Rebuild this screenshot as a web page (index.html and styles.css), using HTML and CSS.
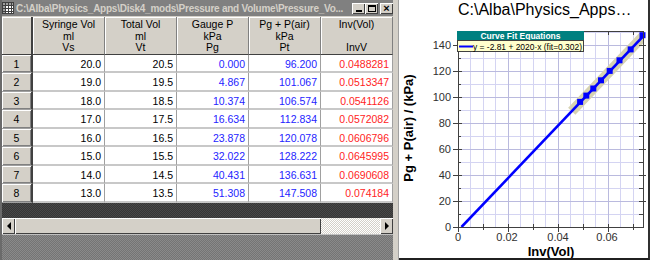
FILE: index.html
```html
<!DOCTYPE html>
<html>
<head>
<meta charset="utf-8">
<link rel="stylesheet" href="styles.css">
</head>
<body>
<div class="screen">
  <div class="win">
    <div class="titlebar">
      <svg class="ticon" width="12" height="12" viewBox="0 0 12 12">
        <rect x="0.5" y="0.5" width="11" height="11" fill="#fff" stroke="#404040"/>
        <rect x="1" y="1" width="10" height="2" fill="#a0a0a0"/>
        <rect x="1" y="1" width="2" height="10" fill="#a0a0a0"/>
        <path d="M0 3.5H12M0 6.5H12M0 9.5H12M3.5 0V12M6.5 0V12M9.5 0V12" stroke="#404040" stroke-width="1"/>
      </svg>
      <span class="ttext">C:\Alba\Physics_Apps\Disk4_mods\Pressure and Volume\Pressure_Vo...</span>
      <div class="tbtns">
        <span class="tbtn"><span class="g-min"></span></span>
        <span class="tbtn"><span class="g-max"></span></span>
        <span class="tbtn close">×</span>
      </div>
    </div>
    <div class="grid">
      <div class="hc corner"></div>
      <div class="hc">Syringe Vol<br>ml<br>Vs</div>
      <div class="hc">Total Vol<br>ml<br>Vt</div>
      <div class="hc">Gauge P<br>kPa<br>Pg</div>
      <div class="hc">Pg + P(air)<br>kPa<br>Pt</div>
      <div class="hc">Inv(Vol)<br><br>InvV</div>

      <div class="rh">1</div><div class="c">20.0</div><div class="c">20.5</div><div class="c blue">0.000</div><div class="c blue">96.200</div><div class="c red">0.0488281</div>
      <div class="rh">2</div><div class="c">19.0</div><div class="c">19.5</div><div class="c blue">4.867</div><div class="c blue">101.067</div><div class="c red">0.0513347</div>
      <div class="rh">3</div><div class="c">18.0</div><div class="c">18.5</div><div class="c blue">10.374</div><div class="c blue">106.574</div><div class="c red">0.0541126</div>
      <div class="rh">4</div><div class="c">17.0</div><div class="c">17.5</div><div class="c blue">16.634</div><div class="c blue">112.834</div><div class="c red">0.0572082</div>
      <div class="rh">5</div><div class="c">16.0</div><div class="c">16.5</div><div class="c blue">23.878</div><div class="c blue">120.078</div><div class="c red">0.0606796</div>
      <div class="rh">6</div><div class="c">15.0</div><div class="c">15.5</div><div class="c blue">32.022</div><div class="c blue">128.222</div><div class="c red">0.0645995</div>
      <div class="rh">7</div><div class="c">14.0</div><div class="c">14.5</div><div class="c blue">40.431</div><div class="c blue">136.631</div><div class="c red">0.0690608</div>
      <div class="rh">8</div><div class="c">13.0</div><div class="c">13.5</div><div class="c blue">51.308</div><div class="c blue">147.508</div><div class="c red">0.074184</div>
    </div>
    <div class="empty"></div>
    <div class="hscroll">
      <span class="sbtn"><span class="arr-l"></span></span>
      <span class="thumb"></span>
      <span class="track"></span>
      <span class="sbtn"><span class="arr-r"></span></span>
    </div>
    <div class="wbottom"></div>
  </div>
  <div class="divider"></div>
  <div class="chart">
    <svg class="plot" width="249" height="258" viewBox="0 0 249 258">
      <defs>
        <clipPath id="pa"><rect x="59" y="31" width="186" height="196"/></clipPath>
      </defs>
      <text class="ctitle" x="59" y="15">C:\Alba\Physics_Apps…</text>
      <path class="gmin" d="M71.5 31V227M84.5 31V227M96.5 31V227M121.5 31V227M134.5 31V227M146.5 31V227M171.5 31V227M184.5 31V227M196.5 31V227M221.5 31V227M234.5 31V227M59 214.5H245M59 188.5H245M59 162.5H245M59 136.5H245M59 110.5H245M59 84.5H245M59 58.5H245M59 32.5H245"/>
      <path class="gmaj" d="M109.5 31V227M159.5 31V227M209.5 31V227M59 201.5H245M59 175.5H245M59 149.5H245M59 123.5H245M59 97.5H245M59 71.5H245M59 45.5H245"/>
      <g clip-path="url(#pa)">
        <line x1="172.75" y1="111.2" x2="247.75" y2="32.4" stroke="#d6d2b2" stroke-width="10"/>
        <line x1="62.5" y1="227" x2="244.5" y2="35.9" stroke="#0000ff" stroke-width="2.6"/>
      </g>
      <g fill="#0000ff">
        <rect x="178.1" y="98.9" width="6" height="6"/>
        <rect x="184.3" y="92.6" width="6" height="6"/>
        <rect x="191.3" y="85.5" width="6" height="6"/>
        <rect x="199" y="77.3" width="6" height="6"/>
        <rect x="207.7" y="67.9" width="6" height="6"/>
        <rect x="217.5" y="57.3" width="6" height="6"/>
        <rect x="228.7" y="46.4" width="6" height="6"/>
        <rect x="240.5" y="32.2" width="6" height="6"/>
      </g>
      <rect class="frame" x="59.5" y="31.5" width="185" height="196"/>
      <path class="tick" d="M54 227.5H63M54 201.5H63M54 175.5H63M54 149.5H63M54 123.5H63M54 97.5H63M54 71.5H63M54 45.5H63M59 214.5H62M59 188.5H62M59 162.5H62M59 136.5H62M59 110.5H62M59 84.5H62M59 58.5H62
        M240 214.5H245M240 201.5H247M240 188.5H245M240 175.5H247M240 162.5H245M240 149.5H247M240 136.5H245M240 123.5H247M240 110.5H245M240 97.5H247M240 84.5H245M240 71.5H247M240 58.5H245M240 45.5H247
        M59.5 224V232M84.5 224V230M109.5 224V232M134.5 224V230M159.5 224V232M184.5 224V230M209.5 224V232M234.5 224V230
        M84.5 31V35M109.5 31V35M134.5 31V35M159.5 31V35M184.5 31V35M209.5 31V35M234.5 31V35"/>
      <g class="tl ylab">
        <text x="52" y="231">0</text>
        <text x="52" y="205">20</text>
        <text x="52" y="179">40</text>
        <text x="52" y="153">60</text>
        <text x="52" y="127">80</text>
        <text x="52" y="101">100</text>
        <text x="52" y="75">120</text>
        <text x="52" y="49">140</text>
      </g>
      <g class="tl xlab">
        <text x="59" y="241">0</text>
        <text x="108" y="241">0.02</text>
        <text x="159" y="241">0.04</text>
        <text x="208" y="241">0.06</text>
      </g>
      <rect x="58" y="31" width="127" height="9" fill="#008080"/>
      <text class="lhead" x="121.5" y="39" textLength="80" lengthAdjust="spacingAndGlyphs">Curve Fit Equations</text>
      <rect x="58.5" y="40.5" width="126" height="11" fill="#ffffcc" stroke="#404040"/>
      <line x1="60" y1="46.5" x2="74" y2="46.5" stroke="#0000ff" stroke-width="2"/>
      <text class="ltext" x="74" y="49.5" textLength="109" lengthAdjust="spacingAndGlyphs">y = -2.81 + 2020·x (fit=0.302)</text>
      <text class="axlab" x="152" y="256">Inv(Vol)</text>
      <text class="axlab" transform="translate(14 128) rotate(-90)">Pg + P(air) / (kPa)</text>
    </svg>
  </div>
</div>
</body>
</html>
```

FILE: styles.css
```css
* { box-sizing: border-box; }
html, body { margin: 0; padding: 0; }
body {
  width: 650px;
  height: 260px;
  overflow: hidden;
  font-family: "Liberation Sans", Arial, sans-serif;
  background: #808080;
}
.screen { display: flex; height: 260px; }

.win {
  width: 393px;
  display: flex;
  flex-direction: column;
  background: #d4d0c8;
  border-left: 2px solid #6a6a6a;
}
.titlebar {
  height: 17px;
  flex: none;
  display: flex;
  align-items: center;
  gap: 2px;
  background: #808080;
  color: #d4d0c8;
  font-weight: bold;
  font-size: 10px;
  letter-spacing: -0.25px;
  border-bottom: 1px solid #d4d0c8;
}
.ticon { flex: none; }
.ttext { flex: 1; white-space: nowrap; overflow: hidden; }
.tbtns { display: flex; flex: none; margin-right: 0; }
.tbtn {
  width: 13px;
  height: 11px;
  background: #d4d0c8;
  box-shadow: inset 1px 1px #fff, inset -1px -1px #404040;
  display: flex;
  align-items: center;
  justify-content: center;
  color: #000;
  font-size: 11px;
  line-height: 11px;
  letter-spacing: 0;
}
.tbtn.close { margin-left: 2px; font-weight: bold; }
.g-min { width: 6px; height: 2px; background: #000; margin-top: 5px; }
.g-max { width: 8px; height: 7px; border: 1px solid #000; border-top-width: 2px; }

.grid {
  display: grid;
  grid-template-columns: 31px repeat(5, 72px);
  grid-template-rows: 38px 18px 19px 18px 19px 18px 19px 18px 19px;
  background: #fff;
  font-size: 10.5px;
  flex: none;
}
.hc {
  background: #d4d0c8;
  border-right: 1px solid #808080;
  border-bottom: 1px solid #404040;
  box-shadow: inset 1px 1px #fff;
  text-align: center;
  line-height: 11.5px;
  padding-top: 2px;
  color: #000;
  white-space: nowrap;
}
.hc.corner { border-right: 2px solid #404040; }
.rh {
  background: #d4d0c8;
  border-right: 2px solid #404040;
  box-shadow: inset 1px 1px #fff, inset -1px -1px #808080;
  border-bottom: 1px solid #a0a0a0;
  display: flex;
  align-items: center;
  justify-content: center;
  color: #000;
}
.c {
  border-right: 1px solid #a0a0a0;
  border-bottom: 2px solid #c8c8c8;
  display: flex;
  align-items: center;
  justify-content: flex-end;
  padding-right: 3px;
  padding-top: 1px;
  color: #000;
  white-space: nowrap;
}
.c.blue { color: #2424ff; }
.c.red { color: #ff2424; }

.empty {
  height: 15px;
  flex: none;
  background: repeating-conic-gradient(#484848 0 25%, #363636 0 50%) 0 0 / 2px 2px;
}
.hscroll {
  height: 16px;
  flex: none;
  display: flex;
  background: #d4d0c8;
}
.sbtn {
  width: 13px;
  flex: none;
  background: #d4d0c8;
  box-shadow: inset 1px 1px #fff, inset -1px -1px #404040;
  display: flex;
  align-items: center;
  justify-content: center;
}
.arr-l { width: 0; height: 0; border: 4px solid transparent; border-right: 4px solid #000; border-left: 0; }
.arr-r { width: 0; height: 0; border: 4px solid transparent; border-left: 4px solid #000; border-right: 0; }
.thumb {
  width: 306px;
  flex: none;
  background: #d4d0c8;
  box-shadow: inset 1px 1px #fff, inset -1px -1px #404040;
}
.track {
  flex: 1;
  background: repeating-conic-gradient(#ffffff 0 25%, #d4d0c8 0 50%) 0 0 / 2px 2px;
}
.wbottom {
  flex: 1;
  border-top: 1px solid #c0c0c0;
  background: repeating-conic-gradient(#8a8a8a 0 25%, #747474 0 50%) 0 0 / 2px 2px;
}

.divider {
  width: 6px;
  flex: none;
  background: #d4d0c8;
  border-right: 1px solid #a0a0a0;
}
.chart {
  width: 251px;
  flex: none;
  background: #fff;
  border-right: 2px solid #303030;
  border-bottom: 2px solid #202020;
}
.plot { display: block; font-family: "Liberation Sans", Arial, sans-serif; }
.ctitle { font-size: 16px; fill: #000; }
.gmin { stroke: #d4d4f2; stroke-width: 1; fill: none; }
.gmaj { stroke: #babade; stroke-width: 1; fill: none; }
.frame { fill: none; stroke: #404040; stroke-width: 1; }
.tick { stroke: #404040; stroke-width: 1; fill: none; }
.tl { font-size: 11px; fill: #303030; }
.ylab { text-anchor: end; }
.xlab { text-anchor: middle; }
.lhead { font-size: 9px; font-weight: bold; fill: #fff; text-anchor: middle; }
.ltext { font-size: 9.5px; fill: #000; }
.axlab { font-size: 13px; font-weight: bold; fill: #000; text-anchor: middle; }
```
